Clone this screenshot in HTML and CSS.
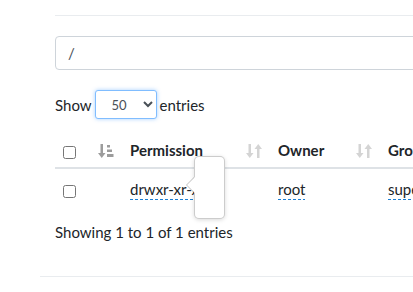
FILE: index.html
```html
<!DOCTYPE html>
<html lang="en">
<head>
    <meta charset="UTF-8">
    <title>Files</title>
    <link rel="stylesheet" href="styles.css">
</head>
<body>
    <div class="panel">
        <div class="panel-body">
            <hr class="divider">
            <input type="text" class="path" value="/">
            <div class="length">
                Show
                <select class="length-select">
                    <option>50</option>
                </select>
                entries
            </div>
            <table class="files">
                <colgroup>
                    <col class="col-check">
                    <col class="col-perm">
                    <col class="col-owner">
                    <col class="col-group">
                </colgroup>
                <thead>
                    <tr>
                        <th class="sorted">
                            <input type="checkbox">
                            <svg class="sort-icon" width="16" height="16" viewBox="0 0 16 16">
                                <rect x="2.5" y="1" width="2.5" height="10" fill="#9c9c9c"/>
                                <polygon points="0,10 7.5,10 3.75,15" fill="#9c9c9c"/>
                                <rect x="9" y="2" width="3" height="2.5" fill="#9c9c9c"/>
                                <rect x="9" y="6.5" width="5" height="2.5" fill="#9c9c9c"/>
                                <rect x="9" y="11" width="6.5" height="3" fill="#9c9c9c"/>
                            </svg>
                        </th>
                        <th>Permission
                            <svg class="sort-icon" width="16" height="16" viewBox="0 0 16 16">
                                <rect x="2.5" y="1" width="2.5" height="10" fill="#d4d4d4"/>
                                <polygon points="0,10 7.5,10 3.75,15" fill="#d4d4d4"/>
                                <polygon points="8.5,6 16,6 12.25,1" fill="#d4d4d4"/>
                                <rect x="11" y="5" width="2.5" height="10" fill="#d4d4d4"/>
                            </svg>
                        </th>
                        <th>Owner
                            <svg class="sort-icon" width="16" height="16" viewBox="0 0 16 16">
                                <rect x="2.5" y="1" width="2.5" height="10" fill="#d4d4d4"/>
                                <polygon points="0,10 7.5,10 3.75,15" fill="#d4d4d4"/>
                                <polygon points="8.5,6 16,6 12.25,1" fill="#d4d4d4"/>
                                <rect x="11" y="5" width="2.5" height="10" fill="#d4d4d4"/>
                            </svg>
                        </th>
                        <th>Group</th>
                    </tr>
                </thead>
                <tbody>
                    <tr>
                        <td><input type="checkbox"></td>
                        <td>
                            <span class="hint">drwxr-xr-x</span>
                            <div class="popover"></div>
                        </td>
                        <td><span class="hint">root</span></td>
                        <td><span class="hint">superuser</span></td>
                    </tr>
                </tbody>
            </table>
            <div class="info">Showing 1 to 1 of 1 entries</div>
        </div>
        <div class="panel-footer"></div>
    </div>
</body>
</html>
```

FILE: styles.css
```css
body {
    margin: 0;
    font-family: 'Lato', sans-serif;
    font-size: 15px;
    line-height: 24px;
    color: #212529;
    background: #fff;
    overflow: hidden;
}
.panel {
    margin-left: 40px;
    width: 500px;
}
.panel-body {
    padding-left: 15px;
    padding-top: 15px;
}
.divider {
    margin: 0;
    border: none;
    border-top: 1px solid #e9ecef;
}
.path {
    display: block;
    box-sizing: border-box;
    margin-top: 20px;
    width: 420px;
    height: 34px;
    padding: 0 12px;
    border: 1px solid #ced4da;
    border-radius: 4px;
    font-family: inherit;
    font-size: 15px;
    color: #495057;
}
.length {
    margin-top: 20px;
    height: 29px;
    display: flex;
    align-items: center;
    gap: 3px;
}
.length-select {
    box-sizing: border-box;
    width: 62px;
    height: 29px;
    padding: 0 0 0 12px;
    border: 1px solid #80bdff;
    border-radius: 3px;
    box-shadow: 0 0 4px rgba(0, 123, 255, 0.35);
    background: #fff;
    font-family: inherit;
    font-size: 13px;
    color: #495057;
}
.files {
    margin-top: 14px;
    border-collapse: collapse;
    table-layout: fixed;
    width: 460px;
}
.col-check { width: 63px; }
.col-perm { width: 148px; }
.col-owner { width: 110px; }
.col-group { width: 139px; }
.files th, .files td {
    position: relative;
    padding: 5px 12px;
    text-align: left;
    white-space: nowrap;
    vertical-align: middle;
}
.files td {
    padding-top: 8px;
}
.files th {
    font-weight: 700;
    border-bottom: 2px solid #dee2e6;
}
.files th:first-child, .files td:first-child {
    padding-left: 5px;
}
.files input[type="checkbox"] {
    margin: 0 0 0 3px;
    vertical-align: middle;
}
.sort-icon {
    position: absolute;
    right: 4px;
    top: 10px;
}
.hint {
    padding-bottom: 2px;
    background-image: linear-gradient(to right, #1a7fd4 3px, transparent 3px);
    background-size: 5px 1px;
    background-repeat: repeat-x;
    background-position: 0 100%;
}
.popover {
    position: absolute;
    left: 76px;
    top: -13px;
    width: 29px;
    height: 61px;
    background: #fff;
    border: 1px solid rgba(0, 0, 0, 0.2);
    border-radius: 5px;
    box-shadow: 0 1px 4px rgba(0, 0, 0, 0.15);
}
.popover::before, .popover::after {
    content: "";
    position: absolute;
    top: 20px;
    border-style: solid;
    border-color: transparent;
}
.popover::before {
    left: -9px;
    border-width: 8px 8px 8px 0;
    border-right-color: rgba(0, 0, 0, 0.25);
}
.popover::after {
    left: -8px;
    border-width: 8px 8px 8px 0;
    border-right-color: #fff;
}
.info {
    margin-top: 14px;
}
.panel-footer {
    margin-top: 32px;
    border-top: 1px solid #e9ecef;
}
```
